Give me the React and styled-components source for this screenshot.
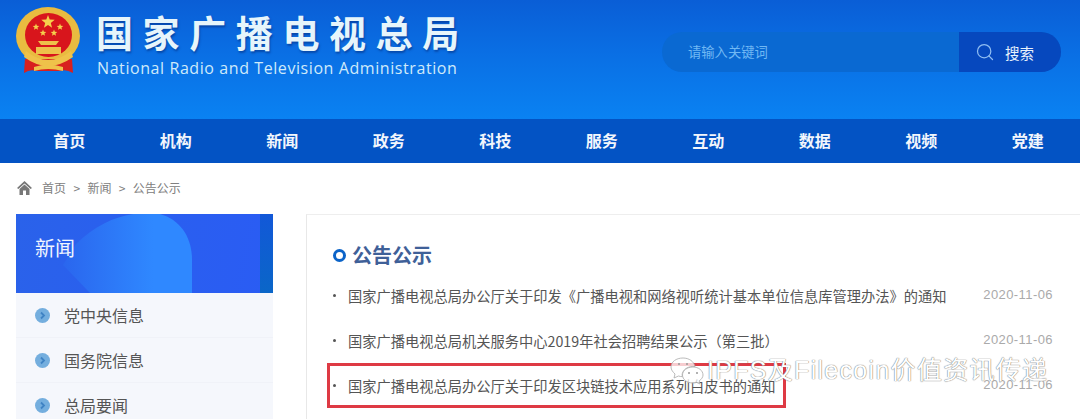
import React from 'react';
import styled, { createGlobalStyle } from 'styled-components';
import { Search } from 'lucide-react';

const GlobalStyle = createGlobalStyle`
  html, body {
    margin: 0;
    padding: 0;
    background: #fff;
    font-family: "Noto Sans CJK SC", "Liberation Sans", sans-serif;
  }
`;

const Page = styled.div`
  position: relative;
  width: 1080px;
  height: 419px;
  overflow: hidden;
`;

const Header = styled.header`
  height: 119px;
  box-sizing: border-box;
  padding: 7px 19px 0 16px;
  display: flex;
  justify-content: space-between;
  align-items: flex-start;
  background: linear-gradient(180deg, #0a5ed6 0%, #0a6fe4 45%, #0a82f2 100%);
`;

const Brand = styled.div`
  display: flex;
  gap: 17px;
`;

const BrandText = styled.div`
  display: flex;
  flex-direction: column;
`;

const Title = styled.div`
  font-size: 37px;
  font-weight: 700;
  line-height: 50px;
  margin-left: -1px;
  letter-spacing: 9.6px;
  color: #e6f5fb;
  white-space: nowrap;
  text-shadow: 1px 2px 2px rgba(0, 40, 120, 0.5);
`;

const SubTitle = styled.div`
  font-family: "Open Sans", sans-serif;
  font-size: 16px;
  line-height: 20px;
  margin-top: 1px;
  letter-spacing: 0.58px;
  color: #cfeafa;
  white-space: nowrap;
`;

const SearchBar = styled.div`
  display: flex;
  width: 399px;
  height: 40px;
  margin-top: 25px;
  border-radius: 20px;
  overflow: hidden;
  background: #0a69d2;
`;

const Placeholder = styled.div`
  flex: 1;
  padding-left: 26px;
  font-size: 13.3px;
  line-height: 39px;
  color: #70b8f4;
`;

const SearchButton = styled.div`
  width: 102px;
  display: flex;
  align-items: center;
  gap: 10px;
  padding-left: 16px;
  box-sizing: border-box;
  background: #0648be;
  color: #e8f2fc;
  font-size: 14.5px;
`;

const Nav = styled.nav`
  height: 44px;
  padding-left: 16px;
  display: grid;
  grid-template-columns: repeat(10, 106.5px);
  background: #0353c4;
`;

const NavItem = styled.div`
  text-align: center;
  font-size: 16px;
  font-weight: 700;
  line-height: 42px;
  color: #f2f6fc;
`;

const Crumbs = styled.div`
  height: 51px;
  box-sizing: border-box;
  padding: 0 0 2px 17px;
  display: flex;
  align-items: center;
  gap: 10px;
  font-size: 12px;
  word-spacing: 4.7px;
  color: #808080;
`;

const Body = styled.div`
  display: flex;
  gap: 33px;
  padding-left: 16px;
`;

const Sidebar = styled.aside`
  width: 257px;
  flex: none;
`;

const SideHead = styled.div`
  position: relative;
  height: 79px;
  overflow: hidden;
  box-sizing: border-box;
  padding-left: 19px;
  font-size: 20px;
  line-height: 68px;
  color: #f0f5ff;
  background: linear-gradient(100deg, #2a62ea 0%, #2a5cf4 100%);

  &::after {
    content: '';
    position: absolute;
    right: 0;
    top: 0;
    width: 13px;
    height: 100%;
    background: linear-gradient(180deg, #1258d8, #0a66c8);
  }
`;

const Blob = styled.svg`
  position: absolute;
  left: 0;
  top: 0;
`;

const SideLabel = styled.span`
  position: relative;
  z-index: 1;
`;

const SideItem = styled.div`
  height: 45px;
  box-sizing: border-box;
  padding-left: 19px;
  display: flex;
  align-items: center;
  gap: 14px;
  font-size: 16px;
  color: #555;
  background: #f5f7fc;
  border-bottom: 1px solid #f0f2f8;
`;

const Bullet = styled.svg`
  width: 15px;
  height: 15px;
  flex: none;
`;

const Main = styled.main`
  flex: 1;
  height: 300px;
  box-sizing: border-box;
  padding: 22px 27px 0 26px;
  border-top: 1px solid #eee;
  border-left: 1px solid #e8e8e8;
`;

const Heading = styled.h2`
  margin: 0;
  display: flex;
  align-items: center;
  gap: 6px;
  font-size: 20px;
  font-weight: 700;
  line-height: 36px;
  color: #3f6098;
`;

const Ring = styled.span`
  width: 13px;
  height: 13px;
  box-sizing: border-box;
  border: 3px solid #0b63c8;
  border-radius: 50%;
`;

const Row = styled.div`
  height: 45px;
  display: flex;
  align-items: center;
  justify-content: space-between;
`;

const RowTitle = styled.div`
  display: flex;
  align-items: center;
  gap: 12px;
  font-size: 14.25px;
  color: #555;
  white-space: nowrap;

  &::before {
    content: '';
    width: 3px;
    height: 3px;
    background: #555;
    border-radius: 50%;
  }
`;

const RowDate = styled.div`
  font-family: "Liberation Sans", sans-serif;
  font-size: 13px;
  letter-spacing: 0.42px;
  color: #aaa;
  margin-top: -2px;
`;

const Highlight = styled.div`
  position: absolute;
  left: 327px;
  top: 363px;
  width: 459px;
  height: 45px;
  box-sizing: border-box;
  border: 3px solid #de3a44;
`;

const Watermark = styled.div`
  position: absolute;
  left: 670px;
  top: 353px;
  display: flex;
  align-items: center;
  gap: 3px;
  font-family: "Liberation Sans", "Noto Sans CJK SC", sans-serif;
  font-size: 25px;
  line-height: 34px;
  letter-spacing: 1.3px;
  color: #fff;
  white-space: nowrap;
  text-shadow: 0 0 1px #777, 0 0 1px #777;
`;

const star = (x, y, r) => {
  const points = [];
  for (let i = 0; i < 10; i++) {
    const radius = i % 2 === 0 ? r : r * 0.42;
    const angle = (Math.PI / 5) * i - Math.PI / 2;
    points.push(`${(x + radius * Math.cos(angle)).toFixed(1)},${(y + radius * Math.sin(angle)).toFixed(1)}`);
  }
  return points.join(' ');
};

const Emblem = () => (
  <svg width="64" height="70" viewBox="0 0 64 70">
    <ellipse cx="32" cy="29" rx="32" ry="29" fill="#e9bb40" />
    <path d="M9 52 L8 66 Q14 62 20 64 L44 64 Q50 62 57 66 L56 52Z" fill="#d8201f" />
    <ellipse cx="32.500" cy="28" rx="23.500" ry="22" fill="#d8151c" />
    <path d="M10 44 Q32 62 55 44 L57 50 Q32 68 8 50Z" fill="#efc24a" />
    <path d="M18 60 Q32 55 47 60 L47 64 Q32 60 18 64Z" fill="#efc24a" />
    <path d="M25 38 h15 l3 -4 h-21Z M20 47 h25 v-7 h-25Z" fill="#eec14a" />
    <polygon points={star(32, 15, 7)} fill="#f5cf4c" />
    <polygon points={star(20, 20, 3.5)} fill="#f5cf4c" />
    <polygon points={star(44, 20, 3.5)} fill="#f5cf4c" />
    <polygon points={star(27, 26, 3.5)} fill="#f5cf4c" />
    <polygon points={star(38, 26, 3.5)} fill="#f5cf4c" />
  </svg>
);

const HomeIcon = () => (
  <svg width="15" height="14" viewBox="0 0 15 14" fill="#777">
    <path d="M7.500 0 L15 7 L13.600 8 L7.500 2.500 L1.400 8 L0 7Z" />
    <path d="M2.500 8 L7.500 3.500 L12.500 8 V14 H9 V9.500 H6 V14 H2.500Z" />
  </svg>
);

const ArrowBullet = () => (
  <Bullet viewBox="0 0 15 15">
    <circle cx="7.500" cy="7.500" r="7.500" fill="#74aede" />
    <path d="M6 4.500 L9 7.500 L6 10.500" fill="none" stroke="#3f83c4" strokeWidth="1.800" />
  </Bullet>
);

const WeChat = () => (
  <svg width="34" height="30" viewBox="0 0 34 30" fill="rgba(255,255,255,0.75)" stroke="#aaa" strokeWidth="0.8">
    <path d="M13 3 C6 3 1 7 1 12 C1 15 3 17 5 19 L4 23 L8.500 21 C10 21.500 11 21.600 12.500 21.600 C12 20 12 19 12.500 18 C14 13.500 19 11 25 11.500 C24 6.500 19 3 13 3Z" />
    <path d="M23 12 C17 12 12.500 15.500 12.500 20 C12.500 24.500 17 28 23 28 C24.500 28 25.500 27.800 26.500 27.400 L30 29 L29.200 25.800 C31.500 24.300 33 22.300 33 20 C33 15.500 28.500 12 23 12Z" />
    <circle cx="9" cy="9" r="1" fill="#999" stroke="none" />
    <circle cx="17" cy="9" r="1" fill="#999" stroke="none" />
    <circle cx="19" cy="18" r="1" fill="#999" stroke="none" />
    <circle cx="27" cy="18" r="1" fill="#999" stroke="none" />
  </svg>
);

const navItems = ['首页', '机构', '新闻', '政务', '科技', '服务', '互动', '数据', '视频', '党建'];
const sideItems = ['党中央信息', '国务院信息', '总局要闻'];
const notices = [
  { title: '国家广播电视总局办公厅关于印发《广播电视和网络视听统计基本单位信息库管理办法》的通知', date: '2020-11-06' },
  { title: '国家广播电视总局机关服务中心2019年社会招聘结果公示（第三批）', date: '2020-11-06' },
  { title: '国家广播电视总局办公厅关于印发区块链技术应用系列白皮书的通知', date: '2020-11-06' },
];

const App = () => (
  <Page>
    <GlobalStyle />
    <Header>
      <Brand>
        <Emblem />
        <BrandText>
          <Title>国家广播电视总局</Title>
          <SubTitle>National Radio and Television Administration</SubTitle>
        </BrandText>
      </Brand>
      <SearchBar>
        <Placeholder>请输入关键词</Placeholder>
        <SearchButton>
          <Search size={20} color="#8fbdf2" strokeWidth={1.5} />
          搜索
        </SearchButton>
      </SearchBar>
    </Header>
    <Nav>
      {navItems.map(item => (
        <NavItem key={item}>{item}</NavItem>
      ))}
    </Nav>
    <Crumbs>
      <HomeIcon />
      <span>首页 &gt; 新闻 &gt; 公告公示</span>
    </Crumbs>
    <Body>
      <Sidebar>
        <SideHead>
          <Blob width="257" height="79" viewBox="0 0 257 79">
            <defs>
              <linearGradient id="blobFill" x1="0" y1="0.5" x2="1" y2="0.5">
                <stop offset="0" stopColor="#2a66ee" />
                <stop offset="0.7" stopColor="#2f88ff" />
              </linearGradient>
            </defs>
            <path d="M74 79 L47 51 L60 30 C78 12 98 3 117 0 L144 0 C165 6 176 24 176 46 L176 79Z" fill="url(#blobFill)" />
          </Blob>
          <SideLabel>新闻</SideLabel>
        </SideHead>
        {sideItems.map(item => (
          <SideItem key={item}>
            <ArrowBullet />
            {item}
          </SideItem>
        ))}
      </Sidebar>
      <Main>
        <Heading>
          <Ring />
          公告公示
        </Heading>
        {notices.map(notice => (
          <Row key={notice.title}>
            <RowTitle>{notice.title}</RowTitle>
            <RowDate>{notice.date}</RowDate>
          </Row>
        ))}
      </Main>
    </Body>
    <Highlight />
    <Watermark>
      <WeChat />
      IPFS及Filecoin价值资讯传递
    </Watermark>
  </Page>
);

export default App;
